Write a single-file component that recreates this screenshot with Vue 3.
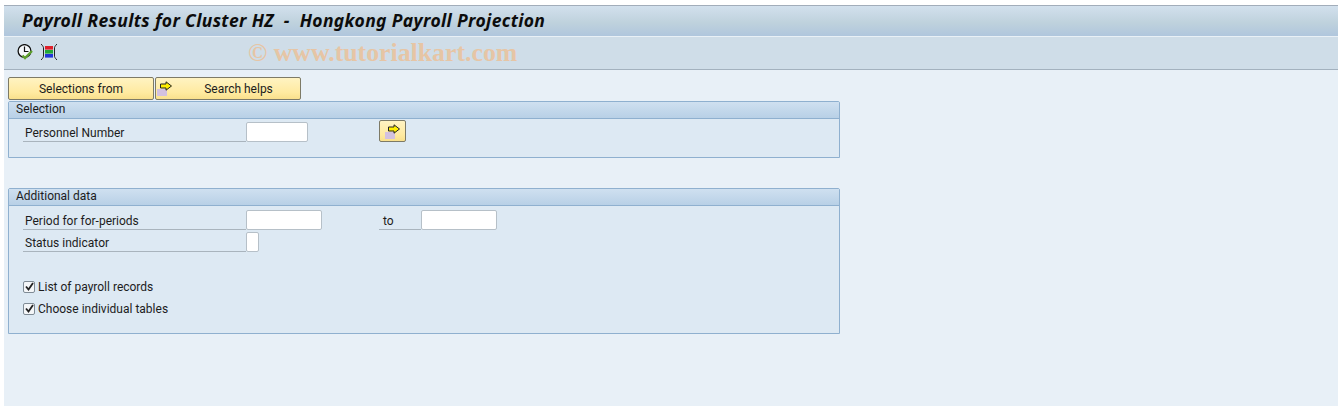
<template>
  <div class="screen">
    <header class="title-bar">
      <h1>Payroll Results for Cluster HZ &nbsp;-&nbsp; Hongkong Payroll Projection</h1>
    </header>

    <div class="toolbar">
      <svg class="tool-icon" width="17" height="16" viewBox="0 0 17 16">
        <circle cx="7.5" cy="7" r="6.4" fill="#f4f7fa" stroke="#111" stroke-width="1.3" />
        <path d="M7.5 2.5V7.5H11.5" fill="none" stroke="#111" stroke-width="1.2" />
        <path d="M5.5 11.5l2.5 2.5 7-7" fill="none" stroke="#5da02c" stroke-width="2.3" />
      </svg>
      <svg class="tool-icon" width="16" height="16" viewBox="0 0 16 16">
        <path d="M0 0C2 2 2.5 3 2.5 4V12C2.5 13 2 14 0 16M16 0C14 2 13.5 3 13.5 4V12C13.5 13 14 14 16 16" fill="none" stroke="#222" />
        <rect x="4" y="2" width="8" height="3.6" fill="#e0202a" />
        <rect x="4" y="6" width="8" height="3.6" fill="#22a838" />
        <rect x="4" y="10" width="8" height="3.6" fill="#2336d8" />
      </svg>
      <span class="watermark">© www.tutorialkart.com</span>
    </div>

    <main class="content">
      <div class="top-buttons">
        <button class="sap-btn selections">Selections from</button>
        <button class="sap-btn helps">
          <svg class="arrow" width="15" height="15" viewBox="0 0 15 15">
            <rect x="0" y="8" width="10" height="7" fill="#d3c1e0" />
            <path d="M3.5 3H9V0.8L14.5 5 9 9.2V7H3.5z" fill="#ffee00" stroke="#222" />
          </svg>
          Search helps
        </button>
      </div>

      <section class="group selection">
        <div class="group-head">Selection</div>
        <div class="group-body">
          <div class="row">
            <label class="field-label">Personnel Number</label>
            <input class="field w62" type="text" />
            <button class="sap-btn icon-btn">
              <svg width="15" height="15" viewBox="0 0 15 15">
                <rect x="0" y="8" width="10" height="7" fill="#d3c1e0" />
                <path d="M3.5 3H9V0.8L14.5 5 9 9.2V7H3.5z" fill="#ffee00" stroke="#222" />
              </svg>
            </button>
          </div>
        </div>
      </section>

      <section class="group additional">
        <div class="group-head">Additional data</div>
        <div class="group-body">
          <div class="row">
            <label class="field-label">Period for for-periods</label>
            <input class="field w76" type="text" />
            <label class="field-label to">to</label>
            <input class="field w76" type="text" />
          </div>
          <div class="row">
            <label class="field-label">Status indicator</label>
            <input class="field w13" type="text" />
          </div>
          <div class="checks">
            <label v-for="item in checks" :key="item" class="check">
              <span class="box">
                <svg width="9" height="9" viewBox="0 0 9 9">
                  <path d="M1 4.5l2.5 3L8 1" fill="none" stroke="#222" stroke-width="1.8" />
                </svg>
              </span>
              {{ item }}
            </label>
          </div>
        </div>
      </section>
    </main>
  </div>
</template>

<script setup>
const checks = ['List of payroll records', 'Choose individual tables'];
</script>

<style>
html, body {
  margin: 0;
  background: #fff;
  overflow: hidden;
}
</style>

<style scoped>
.screen {
  box-sizing: border-box;
  height: 406px;
  padding: 5px 0 0 4px;
  display: flex;
  flex-direction: column;
  font-family: Roboto, "Noto Sans", sans-serif;
  font-size: 12px;
  color: #1c1c1c;
}

.title-bar {
  height: 31px;
  box-sizing: border-box;
  border-top: 1px solid #a2adba;
  background: linear-gradient(#d2e0ed, #bfd2dd 55%, #b0c6dd);
  padding: 0 0 3px 18px;
  display: flex;
  align-items: center;
}

.title-bar h1 {
  margin: 0;
  font-family: "Noto Sans", sans-serif;
  font-size: 17.5px;
  font-weight: 700;
  font-style: italic;
  letter-spacing: 0.36px;
  color: #0c0c0c;
  white-space: nowrap;
}

.toolbar {
  height: 32px;
  border-top: 1px solid #e9f0f6;
  border-bottom: 1px solid #a3b1be;
  background: #cfdde8;
  display: flex;
  align-items: center;
  padding-left: 13px;
  gap: 7px;
}

.tool-icon {
  flex: none;
  margin-bottom: 2px;
}

.watermark {
  margin-left: 184px;
  font-family: "Liberation Serif", serif;
  font-size: 25.8px;
  font-weight: 700;
  color: #e6c5a5;
  white-space: nowrap;
}

.content {
  flex: 1;
  background: #e8f0f7;
  padding: 7px 0 0 4px;
}

.top-buttons {
  display: flex;
  gap: 1px;
  height: 23px;
}

.sap-btn {
  box-sizing: border-box;
  border: 1px solid #7d7a66;
  border-radius: 2px;
  background: linear-gradient(#fff3c2, #ffeaa0 70%, #f9e08c);
  font: inherit;
  color: inherit;
  padding: 0;
  display: flex;
  align-items: center;
  justify-content: center;
}

.selections {
  width: 146px;
}

.helps {
  width: 146px;
  position: relative;
  padding-left: 21px;
}

.arrow {
  position: absolute;
  left: 1px;
  top: 3px;
}

.icon-btn {
  width: 27px;
  height: 22px;
  margin-left: 71px;
}

.group {
  width: 832px;
  box-sizing: border-box;
  border: 1px solid #8fb0cf;
  border-radius: 2px 2px 0 0;
  background: #dde9f3;
}

.selection {
  height: 57px;
  margin-top: 1px;
}

.additional {
  height: 146px;
  margin-top: 30px;
}

.group-head {
  height: 16px;
  line-height: 14px;
  padding-left: 7px;
  background: linear-gradient(#cfe0f0, #b8d0e6);
  border-bottom: 1px solid #8fb0cf;
}

.group-body {
  padding: 4px 0 0 14px;
}

.selection .group-body {
  padding-top: 3px;
}

.row {
  display: flex;
  align-items: flex-end;
  height: 20px;
  margin-bottom: 2px;
}

.field-label {
  box-sizing: border-box;
  width: 223px;
  height: 20px;
  line-height: 23px;
  padding-left: 2px;
  border-bottom: 1px solid #a9b4bd;
}

.field-label.to {
  width: 42px;
  margin-left: 57px;
  padding-left: 4px;
}

.field {
  box-sizing: border-box;
  height: 20px;
  padding: 0;
  border: 1px solid #b6c0c8;
  border-radius: 2px;
  background: #fff;
  outline: none;
}

.w62 { width: 62px; }
.w76 { width: 76px; }
.w13 { width: 13px; }

.checks {
  margin-top: 26px;
  display: flex;
  flex-direction: column;
  gap: 5px;
}

.check {
  height: 17px;
  display: flex;
  align-items: center;
  gap: 3px;
}

.box {
  box-sizing: border-box;
  width: 12px;
  height: 12px;
  border: 1px solid #7f8b95;
  border-radius: 2px;
  background: #f4f6f8;
  display: flex;
  align-items: center;
  justify-content: center;
}
</style>
